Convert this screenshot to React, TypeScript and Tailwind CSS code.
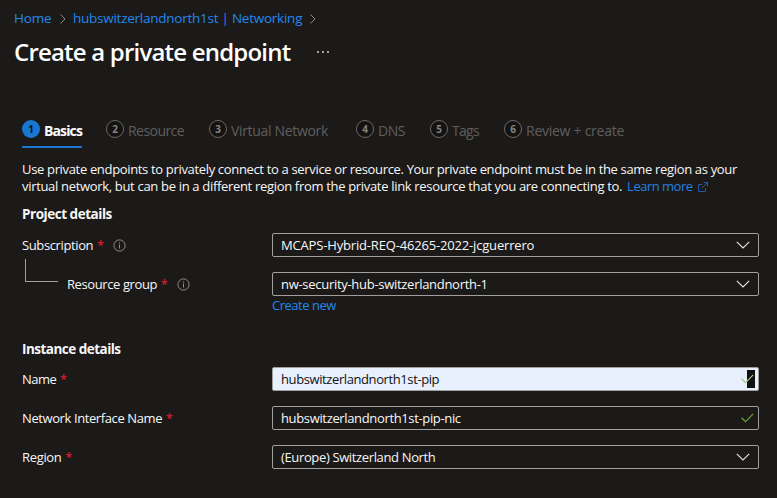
import React from "react";

const tabs = [
  { n: 1, label: "Basics", box: "w-[84px]", track: "tracking-[-0.87px]" },
  { n: 2, label: "Resource", box: "w-[103px]", track: "tracking-[-0.55px]" },
  { n: 3, label: "Virtual Network", box: "w-[147px]", track: "tracking-[-0.33px]" },
  { n: 4, label: "DNS", box: "w-[74px]", track: "tracking-[-0.5px]" },
  { n: 5, label: "Tags", box: "w-[74px]", track: "tracking-[-0.7px]" },
  { n: 6, label: "Review + create", box: "w-[130px]", track: "tracking-[-0.26px]" },
];

function Crumb() {
  return (
    <svg width="8" height="12" viewBox="0 0 8 12" fill="none" stroke="#8a8886" strokeWidth="1">
      <path d="M1.5 1.5 6 6 1.5 10.5" />
    </svg>
  );
}

function Chevron() {
  return (
    <svg className="mr-[8px] shrink-0" width="14" height="8" viewBox="0 0 14 8" fill="none" stroke="#e8e6e4" strokeWidth="1.1">
      <path d="M.8 .8 7 7 13.2 .8" />
    </svg>
  );
}

function Check({ color = "#6ba33f" }: { color?: string }) {
  return (
    <svg className="relative mr-[4px] shrink-0" width="13" height="10" viewBox="0 0 13 10" fill="none" stroke={color} strokeWidth="1.2">
      <path d="M.6 4.8 4.5 8.6 12.2 .9" />
    </svg>
  );
}

function Info() {
  return (
    <svg className="mt-px ml-[10px] shrink-0" width="13" height="13" viewBox="0 0 13 13" fill="none" stroke="#8f8d8b">
      <circle cx="6.5" cy="6.5" r="5.6" />
      <path d="M6.5 5.5v4M6.5 3.3v1.2" />
    </svg>
  );
}

function Label({ text, track, info }: { text: string; track: string; info?: boolean }) {
  return (
    <div className="flex h-6 items-center">
      <span className={track}>{text}</span>
      <span className="ml-[4px] w-[6px] text-[12px] font-semibold text-[#e01b2c]">*</span>
      {info && <Info />}
    </div>
  );
}

function Field({ text, track, children }: { text: string; track: string; children: React.ReactNode }) {
  return (
    <div className="flex h-6 w-[487px] items-center justify-between rounded-[2px] border border-[#a19f9d] pl-[8px]">
      <span className={track}>{text}</span>
      {children}
    </div>
  );
}

export default function App() {
  return (
    <div className="h-[498px] w-[777px] overflow-hidden bg-[#1b1a19] font-['Open_Sans','Noto_Sans',sans-serif] text-[13px] leading-[17px] whitespace-nowrap text-[#f8f7f6]">
      <nav className="flex h-[37px] items-center pl-[14px] text-[13.5px] text-[#2288ee]">
        <a className="w-[45px] tracking-[-0.2px]">Home</a>
        <Crumb />
        <a className="mr-[7px] ml-[6px] w-[229px] tracking-[-0.25px]">hubswitzerlandnorth1st | Networking</a>
        <Crumb />
      </nav>
      <header className="flex h-[30px] items-center pl-[14px]">
        <h1 className="w-[303px] text-[24px] leading-[30px] font-semibold tracking-[-0.8px] text-white">Create a private endpoint</h1>
        <div className="flex gap-[3px]">
          <i className="size-[2px] bg-[#a5a3a1]" />
          <i className="size-[2px] bg-[#a5a3a1]" />
          <i className="size-[2px] bg-[#a5a3a1]" />
        </div>
      </header>

      <div className="mt-[53px] flex h-[28px] pl-[22px] text-[14px]">
        {tabs.map((t) => (
          <div key={t.n} className={t.box}>
            <div className={`flex h-[28px] w-fit items-start ${t.n === 1 ? "border-b-2 border-[#1877d2]" : ""}`}>
              <span
                className={`flex size-[18px] items-center justify-center rounded-full text-[10px] leading-none font-bold ${
                  t.n === 1 ? "bg-[#1877d2] text-[#111]" : "border border-[#6b6967] bg-[#141312] text-[#858381]"
                }`}
              >
                {t.n}
              </span>
              <span className={`ml-[4px] pt-[2px] leading-[18px] ${t.track} ${t.n === 1 ? "font-bold text-white" : "text-[#605e5c]"}`}>{t.label}</span>
            </div>
          </div>
        ))}
      </div>

      <main className="pl-[22px]">
        <p className="pt-[13px]">
          <span className="block tracking-[-0.335px]">Use private endpoints to privately connect to a service or resource. Your private endpoint must be in the same region as your</span>
          <span className="flex items-center">
            <span className="tracking-[-0.32px]">virtual network, but can be in a different region from the private link resource that you are connecting to.</span>
            <a className="ml-[5px] tracking-[-0.5px] text-[#2580e0]">Learn more</a>
            <svg className="ml-[5px]" width="10" height="10" viewBox="0 0 10 10" fill="none" stroke="#1d5ba3">
              <path d="M4 2.5H.5v7h7V6M5.5.5h4v4M9.5.5 4 6" />
            </svg>
          </span>
        </p>
        <h2 className="mt-[11px] h-[17px] text-[13.5px] font-bold tracking-[-0.47px]">Project details</h2>

        <div className="mt-[10px] flex">
          <div className="w-[250px]">
            <Label text="Subscription" track="tracking-[-0.38px]" info />
            <div className="mt-[2px] flex">
              <div className="ml-[3px] h-[23px] w-[33px] border-b border-l border-[#a19f9d]" />
              <div className="mt-[13px] ml-[9px]">
                <Label text="Resource group" track="tracking-[-0.4px]" info />
              </div>
            </div>
          </div>
          <div>
            <Field text="MCAPS-Hybrid-REQ-46265-2022-jcguerrero" track="tracking-[-0.17px]"><Chevron /></Field>
            <div className="h-[15px]" />
            <Field text="nw-security-hub-switzerlandnorth-1" track="tracking-[-0.29px]"><Chevron /></Field>
            <a className="block h-[17px] pt-px tracking-[-0.48px] text-[#2288ee]">Create new</a>
          </div>
        </div>

        <h2 className="mt-[27px] h-[17px] pt-px text-[13.5px] font-bold tracking-[-0.52px]">Instance details</h2>
        <div className="mt-[10px] grid grid-cols-[250px_487px] gap-y-[15px]">
          <Label text="Name" track="tracking-[-0.5px]" />
          <div className="relative flex h-6 items-center justify-between rounded-[2px] border border-[#a19f9d] bg-[#e8f0fe] pl-[8px] text-[#111]">
            <span className="tracking-[-0.4px]">hubswitzerlandnorth1st-pip</span>
            <span className="absolute top-[2px] right-[3px] h-[18px] w-[8px] bg-[#111]" />
            <Check color="#9fcc86" />
          </div>
          <Label text="Network Interface Name" track="tracking-[-0.4px]" />
          <Field text="hubswitzerlandnorth1st-pip-nic" track="tracking-[-0.35px]"><Check /></Field>
          <Label text="Region" track="tracking-[-0.33px]" />
          <Field text="(Europe) Switzerland North" track="tracking-[-0.36px]"><Chevron /></Field>
        </div>
      </main>
    </div>
  );
}
